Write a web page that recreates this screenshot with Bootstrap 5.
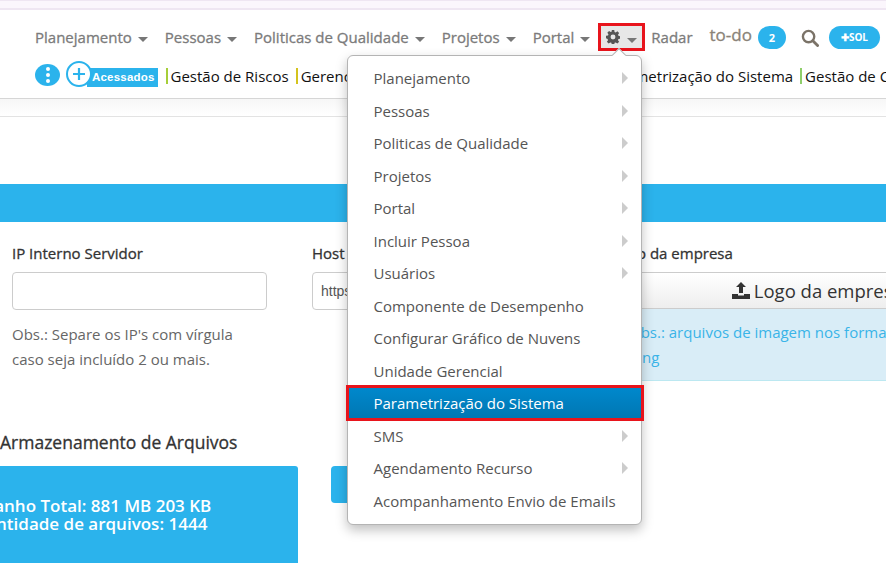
<!DOCTYPE html>
<html lang="pt-BR">
<head>
<meta charset="utf-8">
<title>Parametrização do Sistema</title>
<link href="https://cdn.jsdelivr.net/npm/bootstrap@5.3.0/dist/css/bootstrap.min.css" rel="stylesheet">
<style>
html,body{width:886px;height:563px;overflow:hidden;background:#fff}
body{font-family:"Open Sans","Liberation Sans",sans-serif;font-size:15px;color:#333;position:relative}
.strip-top{height:10px;background:#fbf6fc;border-top:1px solid #efe6f2;border-bottom:2px solid #efe6f2}
.head-area{height:89px;border-bottom:1px solid #d6d6d6;overflow:hidden}
.main-row{height:47px;padding:15px 0 0 35px;white-space:nowrap;align-items:flex-start}
.nav-it{color:#7b7b7b;font-size:15px;line-height:24px;margin-right:17px;display:flex;align-items:center;text-decoration:none;-webkit-text-stroke:.3px #7b7b7b}
.care{display:inline-block;border-left:5px solid transparent;border-right:5px solid transparent;border-top:5px solid #777;margin:4px 0 0 6px}
.gear-box{width:47px;height:28px;border:3px solid #e8141c;background:#e7e7e7;margin:-2px 6px 0 -9px;display:flex;align-items:center;justify-content:center}
.gear-box .care{margin-left:7px;margin-top:6px}
.todo-lbl{font-size:17px;color:#8a8378;line-height:22px;margin:-1px 6px 0 0;-webkit-text-stroke:.3px #8a8378}
.count-pill{width:28px;height:23px;border-radius:12px;background:#2bb3ec;color:#fff;font-size:11px;font-weight:700;text-align:center;line-height:23px;margin:1px 15px 0 0}
.sol-pill{width:51px;height:23px;border-radius:12px;background:#2bb3ec;color:#fff;font-size:10px;font-weight:700;text-align:center;line-height:23px;margin:1px 0 0 10px}
.second-row{padding-left:35px;white-space:nowrap;height:30px;align-items:flex-start}
.dots-btn{width:25px;height:22px;border-radius:50%;background:#2bb3ec;display:flex;flex-direction:column;align-items:center;justify-content:center;gap:2px;margin-top:7px;flex:none}
.dots-btn i{display:block;width:4px;height:4px;border-radius:50%;background:#fff}
.acess-wrap{display:flex;align-items:flex-start;margin-left:6px;margin-right:8px}
.plus-circ{width:26px;height:26px;border-radius:50%;background:#fff;border:2px solid #2bb3ec;position:relative;z-index:1;flex:none;margin-top:4px;display:flex;align-items:center;justify-content:center}
.acess-lbl{background:#2bb3ec;color:#fff;font-family:"Liberation Sans",sans-serif;font-weight:700;font-size:11.5px;height:19px;line-height:19px;margin-left:-5px;padding:0 3px 0 5px;margin-top:11px;letter-spacing:.2px}
.qk-link{color:#111;font-size:15px;border-left:2px solid #a6ce39;padding-left:3px;margin-right:7px;margin-top:11px;line-height:16px;text-decoration:none;flex:none}
.qk-link.tone-y{border-left-color:#d4c31e;width:295px}
.qk-link.tone-g{border-left-color:#8fce6a}
.sub-strip{height:18px;background:linear-gradient(#f7f7f7,#fff);border-bottom:1px solid #e3e3e3}
.band{height:38px;background:#2bb3ec;margin-top:67px}
.form-line{padding:21px 0 0 12px;white-space:nowrap;width:1000px}
.fld-a,.fld-b{width:300px;flex:none}
.fld-c{flex:none;width:400px}
.lab{font-size:15px;color:#333;line-height:20px;margin-bottom:9px;-webkit-text-stroke:.3px #333}
.txt-in{width:255px;height:38px;border:1px solid #ccc;border-radius:4px;padding:6px 8px;font-family:"Liberation Sans",sans-serif;font-size:14px;color:#555;background:#fff;line-height:24px}
.note{color:#666;font-size:15px;line-height:25px;margin-top:12px}
.upl{height:37px;background:linear-gradient(#fff,#eee);border-top:1px solid #ccc;border-bottom:1px solid #ccc;font-size:18.5px;color:#333;line-height:35px;padding-left:120px}
.upl svg{vertical-align:-1px;margin-right:-1px}
.inf{height:72px;background:#d9edf7;border-bottom:1px solid #bce8f1;color:#3ab4e8;font-size:15px;line-height:25px;padding:11px 0 0 17px}
.store-title{font-size:17.5px;color:#333;line-height:24px;margin:49px 0 0 0;-webkit-text-stroke:.3px #333}
.store-row{margin-top:12px;align-items:flex-start}
.store-card{width:311px;height:110px;margin-left:-13px;background:#2bb3ec;border-radius:3px;color:#fff;font-weight:600;font-size:17px;line-height:18px;padding:31px 0 0 0;flex:none;white-space:nowrap;overflow:hidden}
.store-line-a{margin-left:-28.5px}
.store-line-b{margin-left:-25px}
.store-btn{width:50px;height:37px;background:#2bb3ec;border-radius:4px;margin-left:33px;flex:none}
.gear-menu{position:absolute;left:347px;top:55px;width:295px;height:470px;background:#fff;border:1px solid #b4b4b4;border-radius:6px;box-shadow:0 5px 12px rgba(0,0,0,.25);padding:6px 0 0;margin:0;list-style:none;z-index:5}
.gear-menu:before{content:"";position:absolute;right:17px;top:-6px;width:10px;height:10px;background:#fff;border-left:1px solid #b4b4b4;border-top:1px solid #b4b4b4;transform:rotate(45deg)}
.gear-menu li{height:32.5px;line-height:32.5px;padding-left:25.5px;color:#555;font-size:15px;position:relative;white-space:nowrap}
.gear-menu li.sub:after{content:"";position:absolute;right:13px;top:10px;border-left:6px solid #ccc;border-top:6px solid transparent;border-bottom:6px solid transparent}
.gear-menu li.act{background:linear-gradient(#0088cc,#0077b3);color:#fff;border:3px solid #e8141c;margin:-2px -3px -1.5px -2px;padding-left:24.5px;height:36px;line-height:30px}
</style>
</head>
<body>
<div class="strip-top"></div>
<header class="head-area">
  <div class="main-row d-flex">
    <a class="nav-it" href="#">Planejamento<span class="care"></span></a>
    <a class="nav-it" href="#">Pessoas<span class="care"></span></a>
    <a class="nav-it" href="#">Politicas de Qualidade<span class="care"></span></a>
    <a class="nav-it" href="#">Projetos<span class="care"></span></a>
    <a class="nav-it" href="#">Portal<span class="care"></span></a>
    <a class="nav-it gear-box" href="#" aria-label="Configurações"><svg width="14" height="14" viewBox="0 0 16 16"><path fill="#555" fill-rule="evenodd" d="M6.600 0h2.800l.4 2.200 1.300.6L13 1.500l2 2-1.300 1.900.5 1.300 2.200.4v2.800l-2.200.4-.5 1.300 1.300 1.900-2 2-1.900-1.300-1.300.5-.4 2.200H6.600l-.4-2.200-1.300-.5L3 15.500l-2-2 1.300-1.900-.5-1.300L0 9.400V6.600l2.300-.4.500-1.300L1.500 3l2-2 1.900 1.300 1.200-.5zM8 5.200a2.800 2.800 0 1 0 0 5.600 2.800 2.800 0 0 0 0-5.600z"/></svg><span class="care"></span></a>
    <a class="nav-it" href="#">Radar</a>
    <span class="todo-lbl">to-do</span><span class="count-pill">2</span>
    <svg width="18" height="18" viewBox="0 0 19 19" class="mt-1"><circle cx="8" cy="8" r="6" fill="none" stroke="#7b7368" stroke-width="2.500"/><path d="M12.500 12.500 L17.500 17.500" stroke="#7b7368" stroke-width="3" stroke-linecap="round"/></svg>
    <span class="sol-pill">✚SOL</span>
  </div>
  <div class="second-row d-flex">
    <span class="dots-btn"><i></i><i></i><i></i></span>
    <span class="acess-wrap"><span class="plus-circ"><svg width="14" height="14" viewBox="0 0 14 14"><path d="M7 1v12M1 7h12" stroke="#2bb3ec" stroke-width="2.200"/></svg></span><span class="acess-lbl">Acessados</span></span>
    <a class="qk-link" href="#">Gestão de Riscos</a>
    <a class="qk-link tone-y" href="#">Gerenciamento</a>
    <a class="qk-link" href="#">Parametrização do Sistema</a>
    <a class="qk-link tone-g" href="#">Gestão de Contratos</a>
  </div>
</header>
<div class="sub-strip"></div>
<div class="band"></div>
<div class="form-line d-flex">
  <div class="fld-a">
    <div class="lab">IP Interno Servidor</div>
    <div class="txt-in"></div>
    <div class="note">Obs.: Separe os IP's com vírgula<br>caso seja incluído 2 ou mais.</div>
  </div>
  <div class="fld-b">
    <div class="lab">Host</div>
    <div class="txt-in">https://</div>
  </div>
  <div class="fld-c">
    <div class="lab">Logo da empresa</div>
    <div class="upl"><svg width="18" height="17" viewBox="0 0 18 17"><path fill="#333" d="M9 0l5 5h-3v6H7V5H4zM0 12h6v1.500h6V12h6v5H0z"/></svg> Logo da empresa</div>
    <div class="inf">Obs.: arquivos de imagem nos formatos<br>.png</div>
  </div>
</div>
<div class="store-title">Armazenamento de Arquivos</div>
<div class="store-row d-flex">
  <div class="store-card"><div class="store-line-a">Tamanho Total: 881 MB 203 KB</div><div class="store-line-b">Quantidade de arquivos: 1444</div></div>
  <div class="store-btn"></div>
</div>
<ul class="gear-menu">
  <li class="sub">Planejamento</li>
  <li class="sub">Pessoas</li>
  <li class="sub">Politicas de Qualidade</li>
  <li class="sub">Projetos</li>
  <li class="sub">Portal</li>
  <li class="sub">Incluir Pessoa</li>
  <li class="sub">Usuários</li>
  <li>Componente de Desempenho</li>
  <li>Configurar Gráfico de Nuvens</li>
  <li>Unidade Gerencial</li>
  <li class="act">Parametrização do Sistema</li>
  <li class="sub">SMS</li>
  <li class="sub">Agendamento Recurso</li>
  <li>Acompanhamento Envio de Emails</li>
</ul>
<script src="https://cdn.jsdelivr.net/npm/bootstrap@5.3.0/dist/js/bootstrap.bundle.min.js"></script>
</body>
</html>
